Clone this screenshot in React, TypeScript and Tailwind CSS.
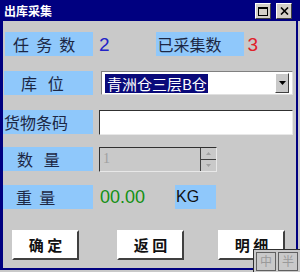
import React from "react";

const cjk = { fontFamily: '"Noto Sans CJK SC", "Noto Sans", sans-serif' };
const lat = { fontFamily: '"Liberation Sans", Arial, sans-serif' };

function Label({ children, className = "" }: { children: React.ReactNode; className?: string }) {
  return (
    <div
      className={`h-[24px] bg-[#8fc8fb] flex items-center text-[16px] leading-none text-[#1c2744] whitespace-pre ${className}`}
      style={cjk}
    >
      {children}
    </div>
  );
}

function Btn({ children, className = "" }: { children: React.ReactNode; className?: string }) {
  return (
    <div
      className={`w-[67px] h-[30px] bg-white border-t-2 border-l-2 border-t-white border-l-white border-r-2 border-b-2 border-r-[#404040] border-b-[#404040] flex items-center justify-center text-[15px] font-bold text-[#111] whitespace-pre ${className}`}
      style={cjk}
    >
      {children}
    </div>
  );
}

export default function App() {
  return (
    <div className="w-[300px] h-[272px] bg-[#c9c9c9] relative overflow-hidden">
      {/* title bar */}
      <div className="h-[21px] w-[300px] bg-[#000080] flex items-center relative">
        <span className="ml-[4px] text-white text-[12px] font-bold leading-none" style={cjk}>
          出库采集
        </span>
        <div className="absolute left-[255px] top-[3px] w-[16px] h-[16px] bg-[#d4d0c8] border border-t-white border-l-white border-r-[#404040] border-b-[#404040] flex items-center justify-center">
          <div className="w-[10px] h-[9px] border border-black border-t-2" />
        </div>
        <div className="absolute left-[276px] top-[3px] w-[16px] h-[16px] bg-[#d4d0c8] border border-t-white border-l-white border-r-[#404040] border-b-[#404040] flex items-center justify-center">
          <svg width="9" height="8" viewBox="0 0 9 8">
            <path d="M1 0.5 L8 7.5 M8 0.5 L1 7.5" stroke="#000" strokeWidth="1.6" />
          </svg>
        </div>
      </div>

      {/* body */}
      <div className="w-[298px] h-[249px] border-l-[3px] border-r-2 border-b-2 border-[#000080] flex flex-col pt-[11px]">
        {/* row 1 */}
        <div className="flex items-center h-[24px]">
          <Label className="ml-[2px] w-[88px] pl-[8px]">{"任  务  数"}</Label>
          <span className="ml-[6px] text-[19px] leading-none text-[#2323c8]" style={lat}>2</span>
          <Label className="ml-[46px] w-[88px] pl-[2px]">已采集数</Label>
          <span className="ml-[4px] text-[19px] leading-none text-[#e0202a]" style={lat}>3</span>
        </div>

        {/* row 2 */}
        <div className="flex items-center h-[24px] mt-[15px]">
          <Label className="ml-[1px] w-[89px] pl-[17px]">{"库   位"}</Label>
          <div className="ml-[8px] w-[192px] h-[24px] bg-white border-t border-l border-t-[#808080] border-l-[#808080] border-r border-b border-r-[#e0e0e0] border-b-[#e0e0e0] flex items-center relative">
            <div
              className="ml-[3px] h-[19px] w-[103px] bg-[#0a0a7a] text-white text-[15px] leading-none pl-[2px] flex items-center whitespace-nowrap"
              style={cjk}
            >
              青洲仓三层B仓
            </div>
            <div className="absolute right-[3px] top-[1px] w-[14px] h-[20px] bg-[#c9c9c9] border border-t-white border-l-white border-r-[#404040] border-b-[#404040] flex items-center justify-center">
              <svg width="7" height="4" viewBox="0 0 7 4">
                <path d="M0 0 H7 L3.5 4 Z" fill="#000" />
              </svg>
            </div>
          </div>
        </div>

        {/* row 3 */}
        <div className="flex items-center h-[24px] mt-[15px]">
          <Label className="w-[90px] pl-[1px]">货物条码</Label>
          <div className="ml-[6px] w-[194px] h-[25px] bg-white border-t border-l border-t-[#303030] border-l-[#303030] border-r border-b border-r-[#e8e8e8] border-b-[#e8e8e8]" />
        </div>

        {/* row 4 */}
        <div className="flex items-center h-[24px] mt-[13px]">
          <Label className="w-[90px] pl-[14px]">{"数   量"}</Label>
          <div className="ml-[6px] w-[118px] h-[25px] bg-[#c9c9c9] border-t border-l border-t-[#303030] border-l-[#303030] border-r border-b border-r-[#e8e8e8] border-b-[#e8e8e8] flex items-center">
            <span className="ml-[3px] text-[14px] leading-none text-[#a0a0a0]" style={{ fontFamily: '"Liberation Serif", serif' }}>
              1
            </span>
            <div className="ml-auto w-[16px] h-[23px] flex flex-col border-l border-[#404040]">
              <div className="h-[12px] border-b border-[#404040] flex items-center justify-center">
                <svg width="5" height="3" viewBox="0 0 5 3"><path d="M0 3 H5 L2.5 0 Z" fill="#a0a0a0" /></svg>
              </div>
              <div className="flex-1 flex items-center justify-center">
                <svg width="5" height="3" viewBox="0 0 5 3"><path d="M0 0 H5 L2.5 3 Z" fill="#a0a0a0" /></svg>
              </div>
            </div>
          </div>
        </div>

        {/* row 5 */}
        <div className="flex items-center h-[24px] mt-[14px]">
          <Label className="w-[90px] pl-[13px]">{"重  量"}</Label>
          <span className="ml-[7px] text-[18px] leading-none text-[#139013]" style={lat}>00.00</span>
          <div className="ml-[30px] w-[41px] h-[24px] bg-[#8fc8fb] flex items-center text-[16px] leading-none text-[#111] pl-[1px]" style={lat}>
            KG
          </div>
        </div>

        {/* buttons */}
        <div className="flex items-center mt-[21px]">
          <Btn className="ml-[9px]">{"确 定"}</Btn>
          <Btn className="ml-[38px]">{"返 回"}</Btn>
          <Btn className="ml-[34px]">{"明 细"}</Btn>
        </div>
      </div>

      {/* IME bar */}
      <div className="absolute left-[253px] top-[249px] w-[47px] h-[23px] bg-[#c9c9c9] border-t border-l border-[#303030] flex items-center gap-[2px] pl-[2px]">
        <div className="w-[20px] h-[19px] border border-[#606060] flex items-center justify-center text-[12px] text-[#9a9a9a] leading-none" style={cjk}>中</div>
        <div className="w-[20px] h-[19px] border border-[#606060] flex items-center justify-center text-[12px] text-[#9a9a9a] leading-none" style={cjk}>半</div>
      </div>
    </div>
  );
}
